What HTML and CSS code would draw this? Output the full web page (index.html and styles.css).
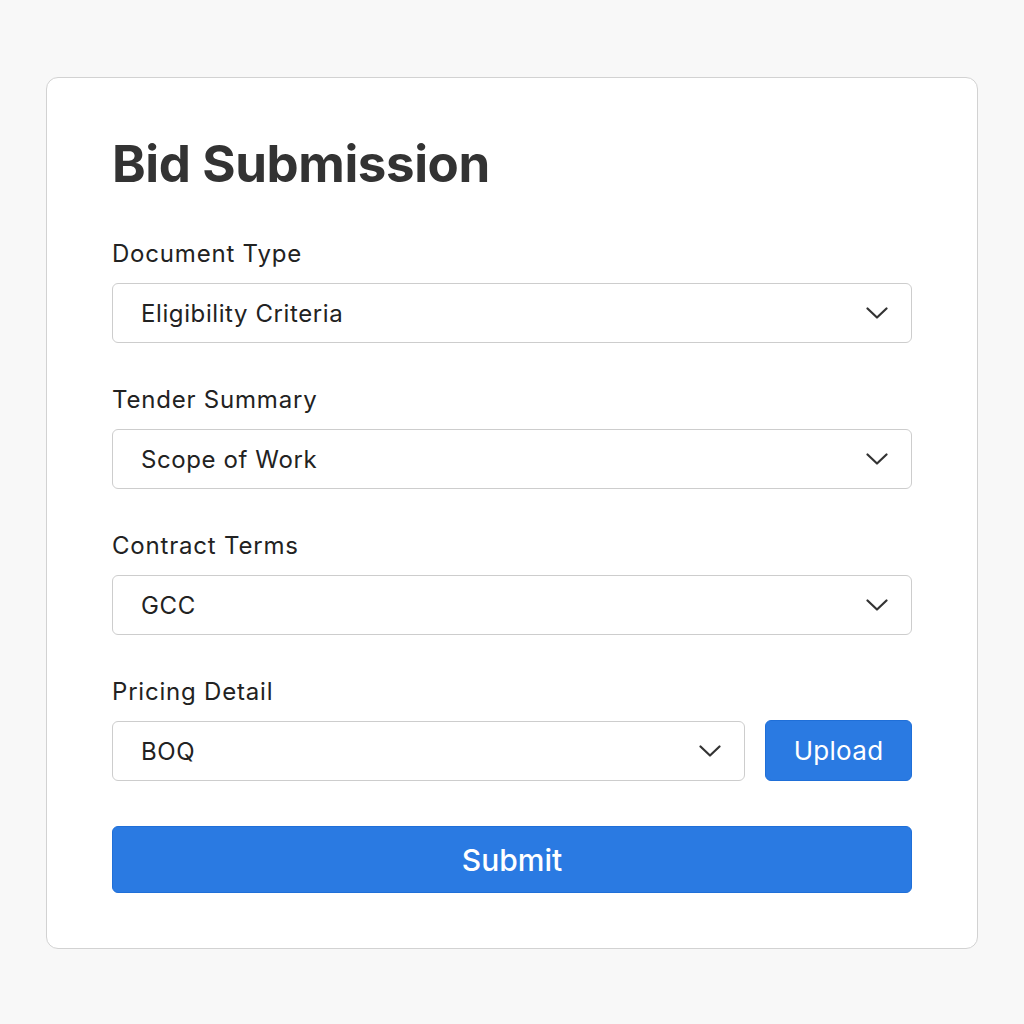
FILE: index.html
```html
<!DOCTYPE html>
<html lang="en">
<head>
<meta charset="utf-8">
<title>Bid Submission</title>
<link rel="stylesheet" href="styles.css">
</head>
<body>
<main class="card">
  <h1 class="title">Bid Submission</h1>
  <form class="form">
    <div class="field">
      <label class="label">Document Type</label>
      <div class="select"><span>Eligibility Criteria</span><svg class="chev" viewBox="0 0 22 12" width="22" height="12"><path d="M1.5 1.5 L11 10.5 L20.5 1.5" fill="none" stroke="#333" stroke-width="2.2" stroke-linecap="round" stroke-linejoin="round"/></svg></div>
    </div>
    <div class="field">
      <label class="label">Tender Summary</label>
      <div class="select"><span>Scope of Work</span><svg class="chev" viewBox="0 0 22 12" width="22" height="12"><path d="M1.5 1.5 L11 10.5 L20.5 1.5" fill="none" stroke="#333" stroke-width="2.2" stroke-linecap="round" stroke-linejoin="round"/></svg></div>
    </div>
    <div class="field">
      <label class="label">Contract Terms</label>
      <div class="select"><span>GCC</span><svg class="chev" viewBox="0 0 22 12" width="22" height="12"><path d="M1.5 1.5 L11 10.5 L20.5 1.5" fill="none" stroke="#333" stroke-width="2.2" stroke-linecap="round" stroke-linejoin="round"/></svg></div>
    </div>
    <div class="field">
      <label class="label">Pricing Detail</label>
      <div class="row">
        <div class="select grow"><span>BOQ</span><svg class="chev" viewBox="0 0 22 12" width="22" height="12"><path d="M1.5 1.5 L11 10.5 L20.5 1.5" fill="none" stroke="#333" stroke-width="2.2" stroke-linecap="round" stroke-linejoin="round"/></svg></div>
        <button type="button" class="btn upload">Upload</button>
      </div>
    </div>
    <button type="button" class="btn submit">Submit</button>
  </form>
</main>
</body>
</html>
```
FILE: styles.css
```css
* { box-sizing: border-box; }
html, body { margin: 0; padding: 0; }
body {
  background: #f8f8f8;
  font-family: Inter, "Noto Sans", "Liberation Sans", sans-serif;
  padding-top: 77px;
  min-height: 1024px;
}
.card {
  width: 932px;
  margin: 0 auto;
  background: #fff;
  border: 1px solid #d2d2d2;
  border-radius: 12px;
  padding: 55px 65px 55px;
}
.title {
  margin: 0 0 44px;
  font-size: 51px;
  line-height: 62px;
  font-weight: 650;
  color: #333;
  letter-spacing: -0.4px;
}
.form {
  display: flex;
  flex-direction: column;
  gap: 42px;
}
.field {
  display: flex;
  flex-direction: column;
  gap: 14px;
}
.label {
  font-size: 24px;
  line-height: 30px;
  color: #222;
  letter-spacing: 0.8px;
}
.select {
  height: 60px;
  border: 1px solid #cdcdcd;
  border-radius: 6px;
  display: flex;
  align-items: center;
  justify-content: space-between;
  padding: 0 23px 0 28px;
  font-size: 24px;
  color: #222;
  background: #fff;
  letter-spacing: 0.6px;
}
.chev { display: block; }
.row {
  display: flex;
  gap: 20px;
}
.grow { flex: 1; }
.btn {
  border: 1px solid #1f6fd8;
  background: #2a7ae2;
  color: #fff;
  font-family: inherit;
  border-radius: 6px;
  cursor: pointer;
}
.upload {
  width: 147px;
  height: 61px;
  margin-top: -1px;
  font-size: 26px;
  letter-spacing: 0.3px;
}
.submit {
  height: 67px;
  margin-top: 3px;
  font-size: 30px;
  font-weight: 500;
}
```
